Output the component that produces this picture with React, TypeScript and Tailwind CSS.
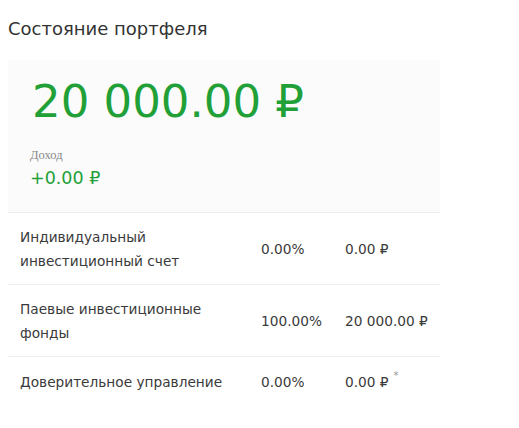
const rows = [
  { name: ["Индивидуальный", "инвестиционный счет"], pct: "0.00%", sum: "0.00 ₽", note: false },
  { name: ["Паевые инвестиционные", "фонды"], pct: "100.00%", sum: "20 000.00 ₽", note: false },
  { name: ["Доверительное управление"], pct: "0.00%", sum: "0.00 ₽", note: true },
];

export default function App() {
  return (
    <div className="min-h-screen bg-white text-[#333] font-['DejaVu_Sans',sans-serif]">
      <div className="w-[432px] ml-2">
        <h2 className="pt-[17px] text-[18px] leading-[24px] text-[#333]">Состояние портфеля</h2>

        <div className="mt-[19px] bg-[#fbfbfb] pl-6 pt-[14px] pb-[23px]">
          <div className="text-[45px] leading-[56px] text-[#21a038]">20 000.00 ₽</div>
          <div className="mt-[18px] -ml-[2px] text-[12.5px] leading-[15px] text-[#888] font-['Liberation_Serif',serif]">Доход</div>
          <div className="mt-[4px] -ml-[2px] text-[17.5px] leading-[22px] text-[#21a038]">+0.00 ₽</div>
        </div>

        <div className="border-t border-[#eee]">
          {rows.map((r, i) => (
            <div
              key={i}
              className={
                "flex items-center pl-3 text-[13.7px] leading-[24px] text-[#3a3a3a] " +
                (i < rows.length - 1 ? "h-[72px] border-b border-[#eee]" : "h-[50px]")
              }
            >
              <div className="w-[241px]">
                {r.name.map((l) => (
                  <div key={l}>{l}</div>
                ))}
              </div>
              <div className="w-[84px]">{r.pct}</div>
              <div className="relative">
                {r.sum}
                {r.note && <span className="absolute -right-[10px] -top-[6px] text-[10px] text-[#999]">*</span>}
              </div>
            </div>
          ))}
        </div>
      </div>
    </div>
  );
}
